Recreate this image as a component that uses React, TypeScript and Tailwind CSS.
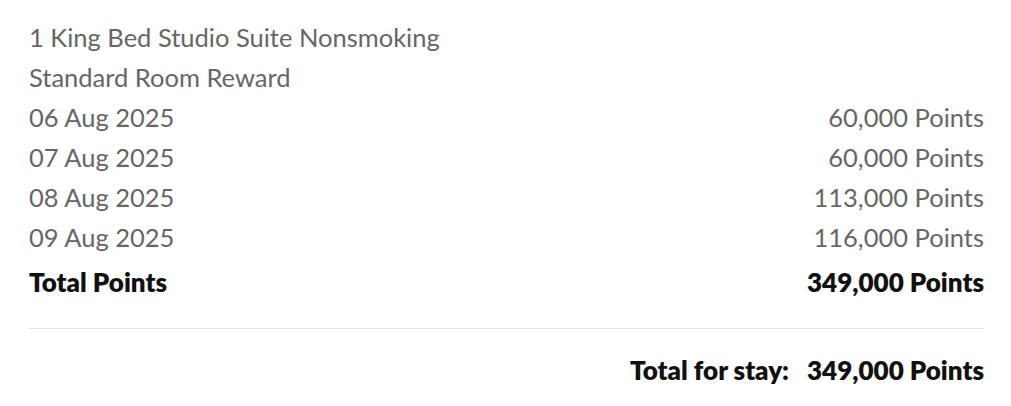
const rows = [
  { date: '06 Aug 2025', pts: '60,000 Points' },
  { date: '07 Aug 2025', pts: '60,000 Points' },
  { date: '08 Aug 2025', pts: '113,000 Points' },
  { date: '09 Aug 2025', pts: '116,000 Points' },
]

export default function App() {
  return (
    <div className="w-[1011px] h-[406px] bg-white pl-[29px] pr-[27px] pt-[17px] font-['Lato',sans-serif] text-[25.5px]">
      <div className="text-[#666666] leading-[40px]">
        <div>1 King Bed Studio Suite Nonsmoking</div>
        <div>Standard Room Reward</div>
        {rows.map((r) => (
          <div key={r.date} className="flex justify-between">
            <span>{r.date}</span>
            <span>{r.pts}</span>
          </div>
        ))}
      </div>
      <div className="flex justify-between font-extrabold text-[26px] text-[#111111] leading-[40px] mt-[5px]">
        <span>Total Points</span>
        <span>349,000 Points</span>
      </div>
      <div className="border-t border-[#e2e2e2] mt-[26px]" />
      <div className="flex justify-end font-extrabold text-[26px] text-[#111111] leading-[40px] mt-[21px] gap-[18px]">
        <span>Total for stay:</span>
        <span>349,000 Points</span>
      </div>
    </div>
  )
}
